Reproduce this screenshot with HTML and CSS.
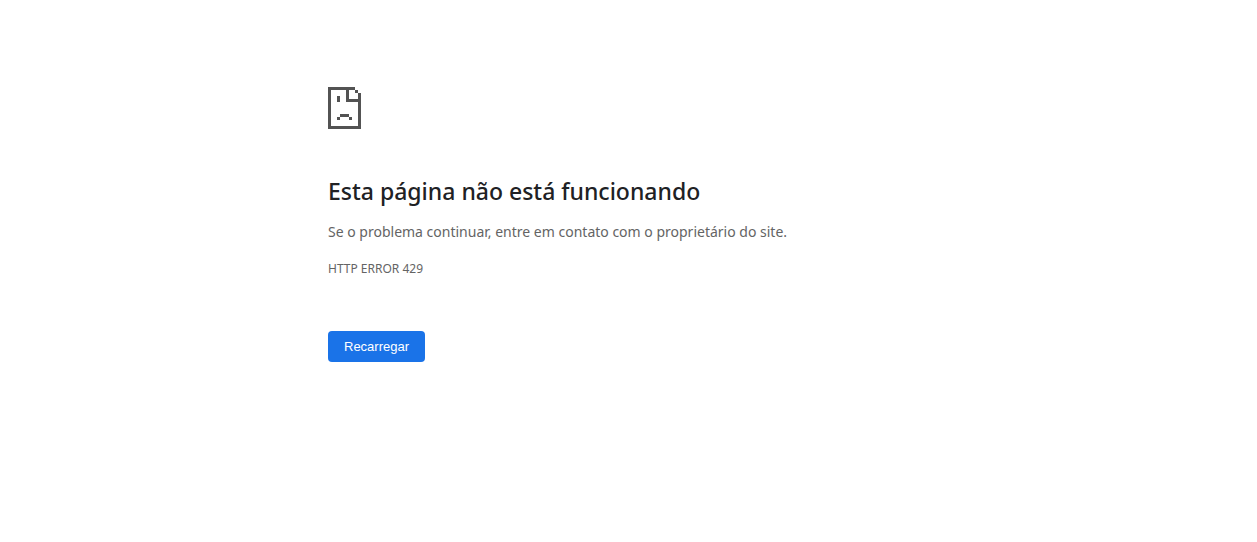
FILE: index.html
```html
<!DOCTYPE html>
<html lang="pt-BR">
<head>
<meta charset="UTF-8">
<meta name="viewport" content="width=device-width, initial-scale=1">
<title>Esta página não está funcionando</title>
<link rel="stylesheet" href="styles.css">
</head>
<body>

<main class="error-page">
    <!-- Sad page icon, drawn on an 11x14 pixel grid -->
    <svg class="icon" viewBox="0 0 11 14" shape-rendering="crispEdges" aria-hidden="true">
        <path d="M0 0H9V1H7V4H10V2H11V14H0ZM1 1V13H10V5H6V1Z" fill-rule="evenodd"/>
        <path d="M9 1h1v1h-1zM3 3h1v2H3zM4 9h3v1H4zM3 10h1v1H3zM7 10h1v1H7z"/>
    </svg>

    <h1>Esta página não está funcionando</h1>
    <p class="summary">Se o problema continuar, entre em contato com o proprietário do site.</p>
    <p class="error-code">HTTP ERROR 429</p>

    <button type="button" class="btn-reload" onclick="location.reload()">Recarregar</button>
</main>

</body>
</html>
```
FILE: styles.css
```css
body {
    margin: 0;
    background: #fff;
    color: #646464;
    font-family: 'Noto Sans', 'Open Sans', sans-serif;
    font-size: 14px;
}

.error-page {
    max-width: 601px;
    margin: 0 auto;
    padding-top: 87px;
}

.icon {
    display: block;
    width: 33px;
    height: 42px;
    fill: #535353;
}

h1 {
    margin: 48px 0 16px;
    color: #202124;
    font-size: 23px;
    font-weight: 500;
    line-height: 28px;
}

p { margin: 0; }

.summary {
    line-height: 22px;
}

.error-code {
    margin-top: 16px;
    font-size: 12px;
    line-height: 20px;
}

.btn-reload {
    margin-top: 52px;
    padding: 8px 16px;
    border: none;
    border-radius: 4px;
    background: #1a73e8;
    color: #fff;
    font-family: 'Liberation Sans', Arial, sans-serif;
    font-size: 13px;
    font-weight: 500;
    line-height: 15px;
    cursor: pointer;
}

.btn-reload:hover { background: #1765cc; }
```
